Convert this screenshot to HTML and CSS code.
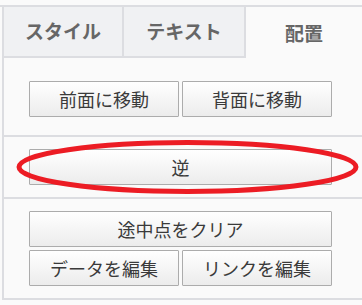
FILE: index.html
```html
<!DOCTYPE html>
<html lang="ja">
<head>
<meta charset="utf-8">
<link rel="stylesheet" href="styles.css">
</head>
<body>
<div class="panel">
  <div class="inner">
    <div class="tabs">
      <div class="tab">スタイル</div>
      <div class="tab">テキスト</div>
      <div class="tab active">配置</div>
    </div>
    <div class="content">
      <div class="section s1">
        <div class="row">
          <button class="btn">前面に移動</button>
          <button class="btn">背面に移動</button>
        </div>
      </div>
      <div class="section s2">
        <div class="row">
          <button class="btn wide">逆</button>
        </div>
      </div>
      <div class="section s3">
        <div class="row">
          <button class="btn wide">途中点をクリア</button>
        </div>
        <div class="row">
          <button class="btn">データを編集</button>
          <button class="btn">リンクを編集</button>
        </div>
      </div>
    </div>
  </div>
</div>
<svg class="mark" width="362" height="305" viewBox="0 0 362 305">
  <ellipse cx="187.5" cy="167" rx="168.5" ry="24.5" fill="none" stroke="#ec1c24" stroke-width="5"/>
</svg>
</body>
</html>
```
FILE: styles.css
```css
html, body {
  margin: 0;
  padding: 0;
  background: #fafafa;
  font-family: "Noto Sans CJK JP", "Noto Sans", sans-serif;
  width: 362px;
  height: 305px;
  overflow: hidden;
}
.panel {
  margin-top: 5px;
  border-top: 2px solid #dcdde1;
}
.inner {
  margin-left: 2px;
  border-left: 2px solid #dcdde1;
}
.tabs {
  display: flex;
  height: 51px;
}
.tab {
  box-sizing: border-box;
  display: flex;
  align-items: center;
  justify-content: center;
  background: #f0f1f3;
  border-bottom: 2px solid #dcdde1;
  border-right: 2px solid #dcdde1;
  color: #666;
  font-weight: bold;
  font-size: 19px;
  padding-bottom: 2px;
}
.tab:nth-child(1) { width: 120px; }
.tab:nth-child(2) { width: 122px; }
.tab.active {
  flex: 1;
  background: #fafafa;
  border: none;
  padding-bottom: 0;
}
.section {
  border-bottom: 2px solid #dcdde1;
  padding-left: 25px;
  display: flex;
  flex-direction: column;
  gap: 3px;
}
.s1 { padding-top: 23px; padding-bottom: 18px; }
.s2 { padding-top: 12px; padding-bottom: 12px; }
.s3 { padding-top: 12px; padding-bottom: 12px; }
.row {
  display: flex;
  gap: 3px;
}
.btn {
  box-sizing: border-box;
  width: 150px;
  height: 36px;
  margin: 0;
  padding: 0;
  border: 1px solid #acacac;
  border-radius: 1px;
  background: linear-gradient(#ffffff, #ececec);
  color: #3a3a3a;
  font-family: "Noto Sans CJK JP", "Noto Sans", sans-serif;
  font-size: 18px;
  line-height: 1;
}
.btn.wide { width: 303px; }
.mark {
  position: absolute;
  left: 0;
  top: 0;
  pointer-events: none;
}
```
